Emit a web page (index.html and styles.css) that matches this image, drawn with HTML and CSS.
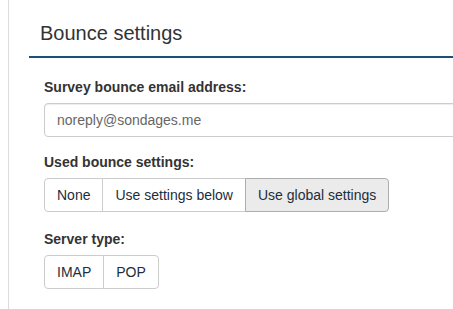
FILE: index.html
```html
<!DOCTYPE html>
<html>
<head>
<meta charset="utf-8">
<link rel="stylesheet" href="styles.css">
</head>
<body>
<div class="page">
  <div class="panel">
    <h3 class="title">Bounce settings</h3>
    <div class="form">
      <div class="group">
        <label class="label">Survey bounce email address:</label>
        <input class="input" type="text" value="noreply@sondages.me">
      </div>
      <div class="group">
        <label class="label">Used bounce settings:</label>
        <div class="btn-group">
          <button class="btn">None</button>
          <button class="btn">Use settings below</button>
          <button class="btn active">Use global settings</button>
        </div>
      </div>
      <div class="group">
        <label class="label">Server type:</label>
        <div class="btn-group">
          <button class="btn">IMAP</button>
          <button class="btn">POP</button>
        </div>
      </div>
    </div>
  </div>
</div>
</body>
</html>
```

FILE: styles.css
```css
html, body {
  margin: 0;
  padding: 0;
  overflow: hidden;
  background: #fff;
}
body {
  font-family: "Liberation Sans", Arial, sans-serif;
  font-size: 14px;
  color: #333;
}
.page {
  margin-left: 8px;
  border-left: 1px solid #dcdcdc;
  height: 309px;
  padding-left: 20px;
  width: 640px;
}
.panel {
  width: 100%;
}
.title {
  margin: 0;
  font-size: 20px;
  font-weight: normal;
  line-height: 22px;
  padding: 22px 11px 12px;
  border-bottom: 2px solid #1d4f7b;
  color: #333;
}
.form {
  padding: 19px 15px 0;
}
.group {
  margin-bottom: 15px;
}
.group:last-child {
  margin-top: 17px;
}
.label {
  display: block;
  font-weight: bold;
  line-height: 20px;
  margin-bottom: 6px;
  color: #333;
}
.input {
  display: block;
  box-sizing: border-box;
  width: 100%;
  height: 34px;
  padding: 6px 12px;
  font-family: inherit;
  font-size: 14px;
  color: #666;
  border: 1px solid #ccc;
  border-radius: 4px;
  box-shadow: inset 0 1px 1px rgba(0,0,0,0.075);
  outline: none;
}
.btn-group {
  display: flex;
}
.btn {
  font-family: inherit;
  font-size: 14px;
  line-height: 20px;
  padding: 6px 12px;
  height: 34px;
  box-sizing: border-box;
  background: #fff;
  color: #1e2d3d;
  border: 1px solid #ccc;
  border-radius: 0;
  margin-left: -1px;
  cursor: pointer;
}
.btn:first-child {
  margin-left: 0;
  border-radius: 4px 0 0 4px;
}
.btn:last-child {
  border-radius: 0 4px 4px 0;
}
.btn.active {
  background: #ebebeb;
  border-color: #adadad;
  position: relative;
}
```
